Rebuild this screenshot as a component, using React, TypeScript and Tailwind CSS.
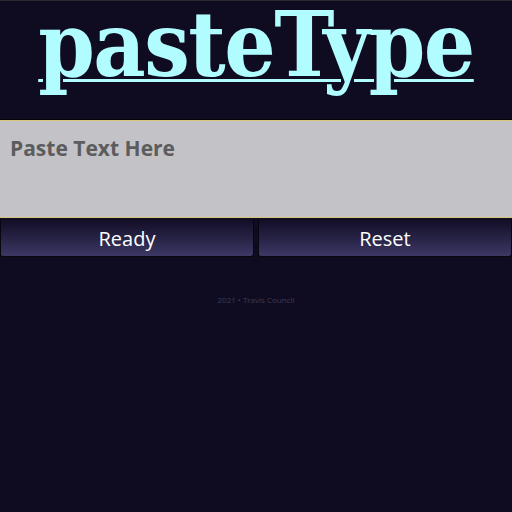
import React from "react";

const App = () => {
  return (
    <div className="w-[512px] h-[512px] bg-[#0f0c22] flex flex-col overflow-hidden">
      <div className="h-[1px] bg-[#2a2a2e]" />
      <header className="h-[118px] flex items-start justify-center">
        <h1
          className="text-[90px] leading-[90px] mt-[-2px] font-bold text-[#b0fcff] underline decoration-[3px] underline-offset-[3px] [font-stretch:condensed] tracking-[-1.5px]"
          style={{ fontFamily: '"DejaVu Serif", serif' }}
        >
          pasteType
        </h1>
      </header>
      <div className="border-t border-[#05040f]" />
      <div className="h-[98px] bg-[#c3c2c6] border-y border-[#d8c57a] px-[10px] pt-[12px]">
        <p
          className="text-[21px] font-bold text-[#5c5c5e]"
          style={{ fontFamily: '"Open Sans", "Noto Sans", sans-serif' }}
        >
          Paste Text Here
        </p>
      </div>
      <div className="flex gap-[4px] mt-[2px] h-[37px]">
        <button
          className="flex-1 rounded-b-[3px] border-x border-b border-[#08070f] bg-gradient-to-b from-[#130f27] to-[#3d3865] text-white text-[20px] pt-[2px]"
          style={{ fontFamily: '"Open Sans", "Noto Sans", sans-serif' }}
        >
          Ready
        </button>
        <button
          className="flex-1 rounded-b-[3px] border-x border-b border-[#08070f] bg-gradient-to-b from-[#130f27] to-[#3d3865] text-white text-[20px] pt-[2px]"
          style={{ fontFamily: '"Open Sans", "Noto Sans", sans-serif' }}
        >
          Reset
        </button>
      </div>
      <p
        className="mt-[37px] text-center text-[8px] text-[#3d3b52]"
        style={{ fontFamily: '"Open Sans", "Noto Sans", sans-serif' }}
      >
        2021 • Travis Council
      </p>
    </div>
  );
};

export default App;
